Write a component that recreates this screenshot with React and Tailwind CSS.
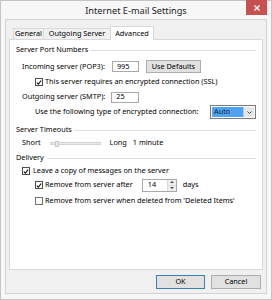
import React from "react";

const Check = ({ checked }) => (
  <div className="w-[8px] h-[8px] border border-[#4d4d4d] bg-white flex items-center justify-center shrink-0">
    {checked && (
      <svg width="7" height="7" viewBox="0 0 7 7">
        <path d="M1 3.6 L2.8 5.4 L6 1.2" fill="none" stroke="#111" strokeWidth="1.3" />
      </svg>
    )}
  </div>
);

const GroupLabel = ({ children, className }) => (
  <div className={`flex items-center pl-[6px] pr-[6px] h-[12px] ${className}`}>
    <span>{children}</span>
    <div className="flex-1 h-px bg-[#dcdcdc] ml-[3px]" />
  </div>
);

const Box = ({ value, className }) => (
  <div className={`h-[11px] bg-white border border-[#a9a9a9] flex items-center pl-[4px] ${className}`}>
    {value}
  </div>
);

const App = () => {
  return (
    <div className="w-[272px] h-[300px] bg-[#f7f7f7] border border-[#c4c4c4] flex flex-col text-[7.3px] text-black font-['Noto_Sans',sans-serif] leading-none">
      {/* title bar */}
      <div className="h-[18px] relative flex items-center justify-center shrink-0">
        <span className="text-[9.2px] text-[#222] pt-[2px]">Internet E-mail Settings</span>
        <div className="absolute right-[4px] top-[-1px] w-[21px] h-[15px] bg-[#c75050] flex items-center justify-center">
          <svg width="6" height="6" viewBox="0 0 6 6">
            <path d="M0.5 0.5 L5.5 5.5 M5.5 0.5 L0.5 5.5" stroke="#fff" strokeWidth="1.3" />
          </svg>
        </div>
      </div>

      {/* client area */}
      <div className="flex-1 mx-[4px] mb-[5px] bg-[#f0f0f0] border border-[#d2d2d2] px-[3px] pt-[6px] flex flex-col">
        {/* tabs */}
        <div className="flex items-end h-[13px] pl-[4px] shrink-0">
          <div className="h-[11px] w-[31px] border border-[#d9d9d9] border-b-0 bg-[#f0f0f0] flex items-center justify-center">
            General
          </div>
          <div className="h-[11px] w-[67px] border border-[#d9d9d9] border-b-0 border-l-0 bg-[#f0f0f0] flex items-center justify-center">
            Outgoing Server
          </div>
          <div className="h-[14px] w-[44px] border border-[#d9d9d9] border-b-0 bg-white flex items-center justify-center -mb-px relative z-10 -ml-px">
            Advanced
          </div>
        </div>

        {/* panel */}
        <div className="h-[231px] bg-white border border-[#d9d9d9] flex flex-col shrink-0">
          <GroupLabel className="mt-[4px]">Server Port Numbers</GroupLabel>

          <div className="h-[13px] mt-[4px] flex items-center pl-[12px]">
            <span>Incoming server (POP3):</span>
            <Box value="995" className="w-[27px] ml-[7px]" />
            <div className="ml-[7px] w-[55px] h-[13px] bg-[#e1e1e1] border border-[#adadad] flex items-center justify-center">
              Use Defaults
            </div>
          </div>

          <div className="h-[10px] mt-[4px] flex items-center pl-[25px] gap-[2px]">
            <Check checked />
            <span>This server requires an encrypted connection (SSL)</span>
          </div>

          <div className="h-[12px] mt-[4px] flex items-center pl-[12px]">
            <span>Outgoing server (SMTP):</span>
            <Box value="25" className="w-[28px] ml-[6px]" />
          </div>

          <div className="h-[14px] mt-[2px] flex items-center pl-[25px]">
            <span>Use the following type of encrypted connection:</span>
            <div className="ml-auto mr-[6px] w-[46px] h-[14px] border border-[#7a7a7a] bg-white flex p-px">
              <div className="flex-1 bg-[#4fa3f2] text-[#0d2440] flex items-center pl-[2px]">Auto</div>
              <div className="w-[11px] bg-[#e6e6e6] border-l border-[#c8c8c8] flex items-center justify-center">
                <svg width="5" height="3" viewBox="0 0 5 3">
                  <path d="M0.5 0.5 L2.5 2.5 L4.5 0.5" fill="none" stroke="#333" strokeWidth="0.9" />
                </svg>
              </div>
            </div>
          </div>

          <GroupLabel className="mt-[5px]">Server Timeouts</GroupLabel>

          <div className="h-[12px] mt-[1px] flex items-center pl-[12px]">
            <span>Short</span>
            <div className="relative ml-[9px] w-[51px] h-[3px] bg-[#e7e7e7] border border-[#d4d4d4]">
              <div className="absolute left-[4px] top-[-2px] w-[4px] h-[6px] bg-[#e9e9e9] border border-[#c9c9c9]" />
            </div>
            <span className="ml-[9px]">Long</span>
            <span className="ml-[6px]">1 minute</span>
          </div>

          <GroupLabel className="mt-[3px]">Delivery</GroupLabel>

          <div className="h-[10px] mt-[2px] flex items-center pl-[12px] gap-[3px]">
            <Check checked />
            <span>Leave a copy of messages on the server</span>
          </div>

          <div className="h-[14px] mt-[2px] flex items-center pl-[25px]">
            <Check checked />
            <span className="ml-[2px]">Remove from server after</span>
            <div className="ml-[9px] w-[35px] h-[13px] bg-white border border-[#a9a9a9] flex">
              <div className="flex-1 flex items-center pl-[5px]">14</div>
              <div className="w-[9px] flex flex-col border-l border-[#dadada]">
                <div className="flex-1 bg-[#eeeeee] flex items-center justify-center border-b border-[#dadada]">
                  <svg width="4" height="2" viewBox="0 0 4 2"><path d="M0 2 L2 0 L4 2 Z" fill="#444" /></svg>
                </div>
                <div className="flex-1 bg-[#eeeeee] flex items-center justify-center">
                  <svg width="4" height="2" viewBox="0 0 4 2"><path d="M0 0 L2 2 L4 0 Z" fill="#444" /></svg>
                </div>
              </div>
            </div>
            <span className="ml-[6px]">days</span>
          </div>

          <div className="h-[10px] mt-[4px] flex items-center pl-[25px] gap-[2px]">
            <div className="w-[8px] h-[8px] border border-[#707070] bg-white shrink-0" />
            <span>Remove from server when deleted from 'Deleted Items'</span>
          </div>
        </div>

        {/* footer */}
        <div className="flex justify-end gap-[6px] mt-[5px] pr-[2px]">
          <div className="w-[49px] h-[14px] bg-[#e1e1e1] border border-[#3c7fb1] flex items-center justify-center">
            OK
          </div>
          <div className="w-[50px] h-[14px] bg-[#e1e1e1] border border-[#adadad] flex items-center justify-center">
            Cancel
          </div>
        </div>
      </div>
    </div>
  );
};

export default App;
